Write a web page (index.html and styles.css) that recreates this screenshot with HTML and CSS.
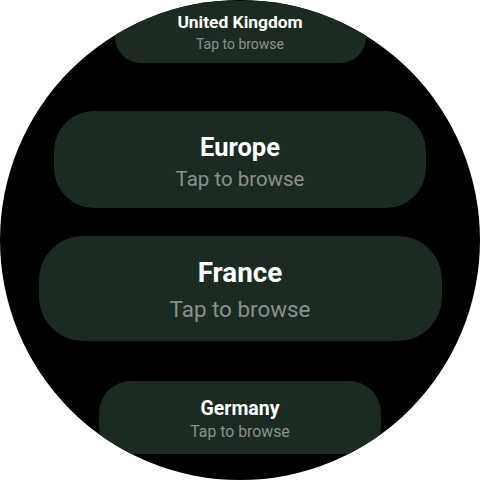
FILE: index.html
```html
<!DOCTYPE html>
<html>
<head>
<meta charset="utf-8">
<link rel="stylesheet" href="styles.css">
</head>
<body>
<div class="screen">
  <div class="list">
    <div class="chip chip-uk">
      <div class="title">United Kingdom</div>
      <div class="sub">Tap to browse</div>
    </div>
    <div class="chip chip-eu">
      <div class="title">Europe</div>
      <div class="sub">Tap to browse</div>
    </div>
    <div class="chip chip-fr">
      <div class="title">France</div>
      <div class="sub">Tap to browse</div>
    </div>
    <div class="chip chip-de">
      <div class="title">Germany</div>
      <div class="sub">Tap to browse</div>
    </div>
  </div>
</div>
</body>
</html>
```
FILE: styles.css
```css
html, body {
  margin: 0;
  padding: 0;
  background: #ffffff;
}
body {
  width: 480px;
  height: 480px;
  font-family: Roboto, "Noto Sans", sans-serif;
}
.screen {
  width: 480px;
  height: 480px;
  border-radius: 50%;
  background: #000000;
  overflow: hidden;
}
.list {
  height: 454px;
  overflow: hidden;
  display: flex;
  flex-direction: column;
  align-items: center;
  padding-top: 1px;
  box-sizing: border-box;
}
.chip {
  flex: none;
  background: #1c2b22;
  display: flex;
  flex-direction: column;
  align-items: center;
  justify-content: center;
  box-sizing: border-box;
}
.title {
  color: #ffffff;
  font-weight: 700;
}
.sub {
  color: #8b908d;
  font-weight: 400;
}
.chip-uk {
  width: 251px;
  height: 62px;
  border-radius: 26px;
  margin-bottom: 48px;
  padding-top: 2px;
}
.chip-uk .title { font-size: 17.4px; line-height: 22px; }
.chip-uk .sub { font-size: 14px; line-height: 22px; }
.chip-eu {
  width: 372px;
  height: 97px;
  border-radius: 40px;
  margin-bottom: 28px;
  padding-top: 6px;
}
.chip-eu .title { font-size: 25.5px; line-height: 32px; }
.chip-eu .sub { font-size: 20.5px; line-height: 32px; }
.chip-fr {
  width: 403px;
  height: 105px;
  border-radius: 44px;
  margin-bottom: 40px;
  padding-top: 4px;
}
.chip-fr .title { font-size: 27.8px; line-height: 36px; }
.chip-fr .sub { font-size: 22.4px; line-height: 36px; }
.chip-de {
  width: 282px;
  height: 78px;
  border-radius: 32px;
}
.chip-de .title { font-size: 19.5px; line-height: 23px; }
.chip-de .sub { font-size: 15.8px; line-height: 23px; }
```
